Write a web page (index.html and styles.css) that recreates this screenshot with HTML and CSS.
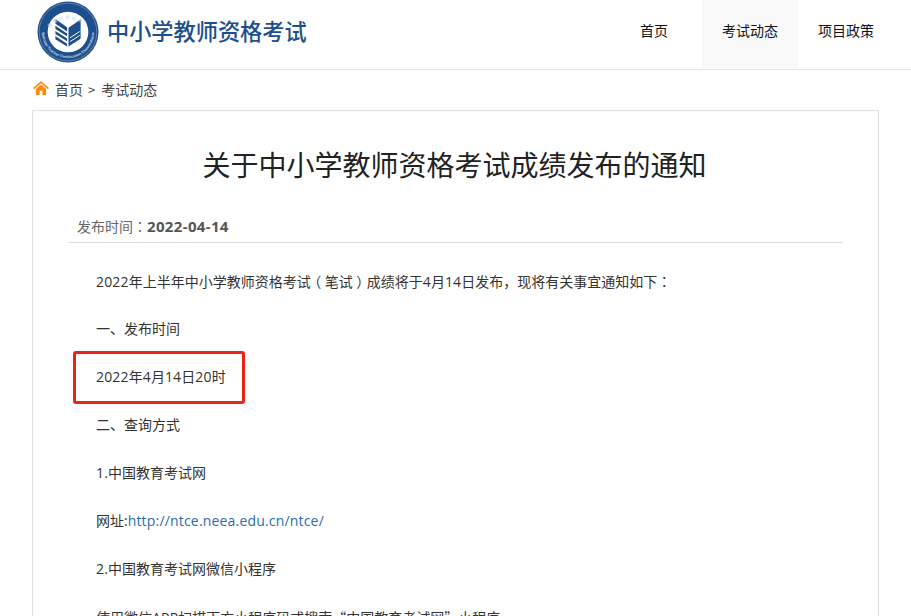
FILE: index.html
```html
<!DOCTYPE html>
<html lang="zh-CN">
<head>
<meta charset="utf-8">
<title>关于中小学教师资格考试成绩发布的通知</title>
<link rel="stylesheet" href="styles.css">
</head>
<body>
<header class="header">
  <div class="brand">
    <svg class="logo" viewBox="0 0 64 64" aria-hidden="true">
      <circle cx="32" cy="32" r="31.5" fill="#1d4f8c"/>
      <circle cx="32" cy="32" r="29.8" fill="none" stroke="#9db4d0" stroke-width="0.5"/>
      <circle cx="32" cy="32" r="21" fill="#fff"/>
      <path d="M32.5 27.5 L45 19 V39 L32.5 47 Z" fill="#1d4f8c"/>
      <path d="M19 18.5 L31 27 V31.5 L19 23.5 Z M19 25.5 L31 33.5 V36.5 L19 28.8 Z M19 31 L31 38.8 V41.5 L19 34 Z M19 36 L31 44 V47 L19 39.5 Z" fill="#1d4f8c"/>
      <path d="M34 42 L44 35.5 M34 38 L44 31.5" stroke="#fff" stroke-width="1"/>
      <defs>
        <path id="ring-top" d="M8.5 38 A24 24 0 0 1 55.5 38"/>
        <path id="ring-bottom" d="M5 32 A27 27 0 0 0 59 32"/>
      </defs>
      <text class="ring-cn"><textPath href="#ring-top" startOffset="50%" text-anchor="middle">教育部考试中心</textPath></text>
      <text class="ring-en"><textPath href="#ring-bottom" startOffset="50%" text-anchor="middle">National Teacher Certification Examinations</textPath></text>
    </svg>
    <span class="brand-name">中小学教师资格考试</span>
  </div>
  <nav class="nav">
    <a class="nav-item">首页</a>
    <a class="nav-item nav-item-active">考试动态</a>
    <a class="nav-item">项目政策</a>
  </nav>
</header>
<div class="crumbs">
  <svg class="home" viewBox="0 0 17 15" aria-hidden="true">
    <path d="M8.5 0 L17 7.6 L15.8 8.9 L8.5 2.5 L1.2 8.9 L0 7.6 Z" fill="#f98a13"/>
    <path d="M3 8.6 L8.5 3.8 L14 8.6 V15 H10 V10.5 H7 V15 H3 Z" fill="#f98a13"/>
  </svg>
  <span>首页</span><span class="sep">&gt;</span><span>考试动态</span>
</div>
<main class="card">
  <h1 class="title">关于中小学教师资格考试成绩发布的通知</h1>
  <div class="meta">发布时间<span class="colon" lang="zh-Hant">：</span><b>2022-04-14</b></div>
  <article class="content">
    <p><span class="num">2022</span>年上半年中小学教师资格考试<span class="paren">（</span>笔试<span class="paren">）</span>成绩将于<span class="num">4</span>月<span class="num">14</span>日发布，现将有关事宜通知如下<span class="colon" lang="zh-Hant">：</span></p>
    <p>一、发布时间</p>
    <p><span class="num">2022</span>年<span class="num">4</span>月<span class="num">14</span>日<span class="num">20</span>时</p>
    <p>二、查询方式</p>
    <p><span class="num">1.</span>中国教育考试网</p>
    <p>网址:<a class="link num">http://ntce.neea.edu.cn/ntce/</a></p>
    <p><span class="num">2.</span>中国教育考试网微信小程序</p>
    <p>使用微信<span class="num">APP</span>扫描下方小程序码或搜索<span class="cjk">“</span>中国教育考试网<span class="cjk">”</span>小程序</p>
  </article>
</main>
<div class="mark"></div>
</body>
</html>
```
FILE: styles.css
```css
* { box-sizing: border-box; }
html, body { height: 616px; overflow: hidden; }
body {
  margin: 0;
  position: relative;
  background: #fff;
  color: #333;
  font-family: "Open Sans", "Noto Sans CJK SC", sans-serif;
  font-size: 14px;
}
.header {
  height: 70px;
  display: flex;
  justify-content: space-between;
  border-bottom: 1px solid #e4e4e4;
  padding: 0 17px 0 37px;
}
.brand { display: flex; align-items: center; gap: 8px; height: 63px; }
.logo { width: 62px; height: 62px; display: block; }
.ring-cn { font-family: "Noto Sans CJK SC", sans-serif; font-size: 4.6px; letter-spacing: 1.6px; fill: #c9d6e6; }
.ring-en { font-family: "Liberation Sans", sans-serif; font-size: 4px; font-weight: 700; fill: #c9d6e6; }
.brand-name {
  font-family: "Noto Sans CJK SC", sans-serif;
  font-size: 22.2px;
  font-weight: 500;
  color: #1d4f8c;
  padding-bottom: 3px;
}
.nav { display: flex; }
.nav-item {
  width: 96px;
  height: 68px;
  display: flex;
  align-items: center;
  justify-content: center;
  font-family: "Noto Sans CJK SC", sans-serif;
  font-size: 14px;
  color: #111;
  padding-bottom: 8px;
}
.nav-item-active { background: #f9f9f9; }
.crumbs {
  height: 40px;
  display: flex;
  align-items: center;
  padding: 0 0 2px 33px;
  font-family: "Noto Sans CJK SC", sans-serif;
  font-size: 14px;
  color: #444;
}
.home { width: 16px; height: 14px; margin-right: 6px; margin-top: -3px; }
.sep { margin: 0 6px 0 5px; font-size: 13px; }
.card {
  margin: 0 32px;
  width: 847px;
  border: 1px solid #e0e0e0;
  padding: 0 35px;
  height: 600px;
}
.title {
  margin: 0 2px 0 0;
  padding-top: 31px;
  font-family: "Noto Sans CJK SC", sans-serif;
  font-size: 28px;
  line-height: 44px;
  font-weight: 400;
  color: #222;
  text-align: center;
}
.meta {
  margin-top: 22px;
  height: 35px;
  padding: 6px 0 0 9px;
  line-height: 24px;
  border-bottom: 1px solid #ddd;
  color: #666;
}
.meta b { color: #555; font-size: 15px; letter-spacing: 0.35px; }
.colon { font-family: "Noto Sans CJK TC", sans-serif; }
.paren {
  font-family: "Noto Sans CJK SC", sans-serif;
  font-feature-settings: "halt";
  margin: 0 3.5px;
}
.num { letter-spacing: 0.18px; }
.cjk { font-family: "Noto Sans CJK SC", sans-serif; }
.content { padding-top: 14px; }
.content p {
  margin: 0;
  line-height: 48px;
  height: 48px;
  padding-left: 28px;
  white-space: nowrap;
}
.link { color: #2a6db0; }
.mark {
  position: absolute;
  left: 73px;
  top: 351px;
  width: 172px;
  height: 53px;
  border: 3px solid #ee2318;
  border-radius: 3px;
}
```
